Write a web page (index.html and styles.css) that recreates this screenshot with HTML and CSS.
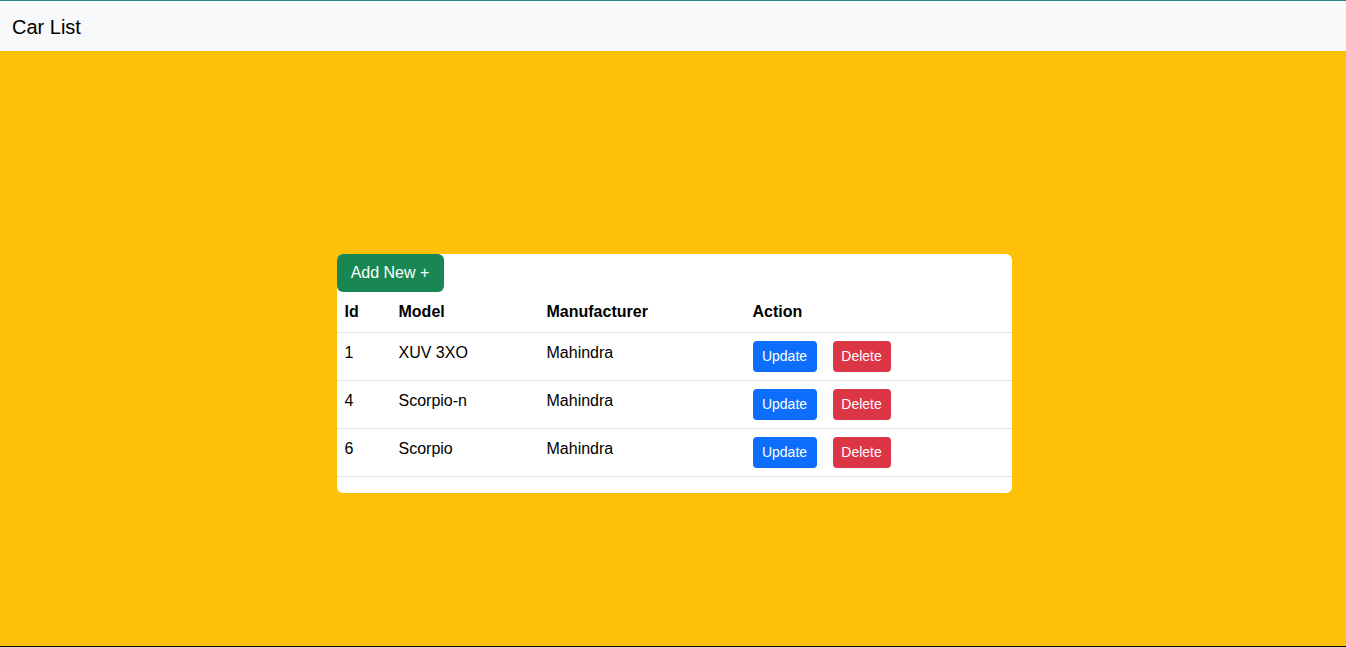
FILE: index.html
```html
<!DOCTYPE html>
<html lang="en">
<head>
<meta charset="utf-8">
<title>Car List</title>
<link rel="stylesheet" href="styles.css">
</head>
<body>
<div class="page">
  <nav class="navbar"><span class="brand">Car List</span></nav>
  <main class="main">
    <div class="card">
      <div class="toolbar"><button class="btn btn-success">Add New +</button></div>
      <table class="table">
        <colgroup>
          <col class="c-id"><col class="c-model"><col class="c-man"><col class="c-act">
        </colgroup>
        <thead>
          <tr><th>Id</th><th>Model</th><th>Manufacturer</th><th>Action</th></tr>
        </thead>
        <tbody>
          <tr><td>1</td><td>XUV 3XO</td><td>Mahindra</td><td class="actions"><button class="btn btn-sm btn-primary">Update</button><button class="btn btn-sm btn-danger">Delete</button></td></tr>
          <tr><td>4</td><td>Scorpio-n</td><td>Mahindra</td><td class="actions"><button class="btn btn-sm btn-primary">Update</button><button class="btn btn-sm btn-danger">Delete</button></td></tr>
          <tr><td>6</td><td>Scorpio</td><td>Mahindra</td><td class="actions"><button class="btn btn-sm btn-primary">Update</button><button class="btn btn-sm btn-danger">Delete</button></td></tr>
        </tbody>
      </table>
    </div>
  </main>
</div>
</body>
</html>
```
FILE: styles.css
```css
* { box-sizing: border-box; }
html, body { margin: 0; height: 100%; }
body {
  font-family: "Liberation Sans", Arial, sans-serif;
  font-size: 16px;
  line-height: 24px;
  color: #212529;
  background: #ffc107;
}
.page {
  height: 647px;
  display: flex;
  flex-direction: column;
  border-top: 1px solid #2f8585;
  border-bottom: 1px solid #000;
}
.navbar {
  height: 50px;
  background: #f8f9fa;
  display: flex;
  align-items: center;
  padding: 1px 12px 0;
  flex: none;
}
.brand { font-size: 20px; line-height: 30px; color: #000; }
.main {
  flex: 1;
  background: #ffc107;
  display: flex;
  justify-content: center;
  align-items: flex-start;
  padding: 203px 0 0 2px;
}
.card {
  width: 675px;
  background: #fff;
  border-radius: 6px;
}
.toolbar { display: flex; }
.btn {
  border: 0;
  font-family: inherit;
  color: #fff;
  cursor: pointer;
}
.btn-success {
  background: #198754;
  font-size: 16px;
  line-height: 24px;
  height: 38px;
  width: 107px;
  border-radius: 6px;
  padding: 0 12px;
}
.btn-sm {
  font-size: 14px;
  line-height: 21px;
  height: 31px;
  padding: 0 8px;
  border-radius: 4px;
  vertical-align: top;
}
.btn-primary { background: #0d6efd; width: 64px; }
.btn-danger { background: #dc3545; width: 58px; }
.table {
  width: 100%;
  border-collapse: collapse;
  margin-bottom: 16px;
  table-layout: fixed;
}
.c-id { width: 54px; }
.c-model { width: 148px; }
.c-man { width: 206px; }
.c-act { width: 267px; }
th, td {
  text-align: left;
  padding: 8px;
  border-bottom: 1px solid #dee2e6;
  color: #000;
  vertical-align: top;
}
th { font-weight: bold; padding-top: 8px; padding-bottom: 8px; }
tbody td { height: 48px; padding: 8px 8px 0; }
.actions .btn + .btn { margin-left: 16px; }
```
